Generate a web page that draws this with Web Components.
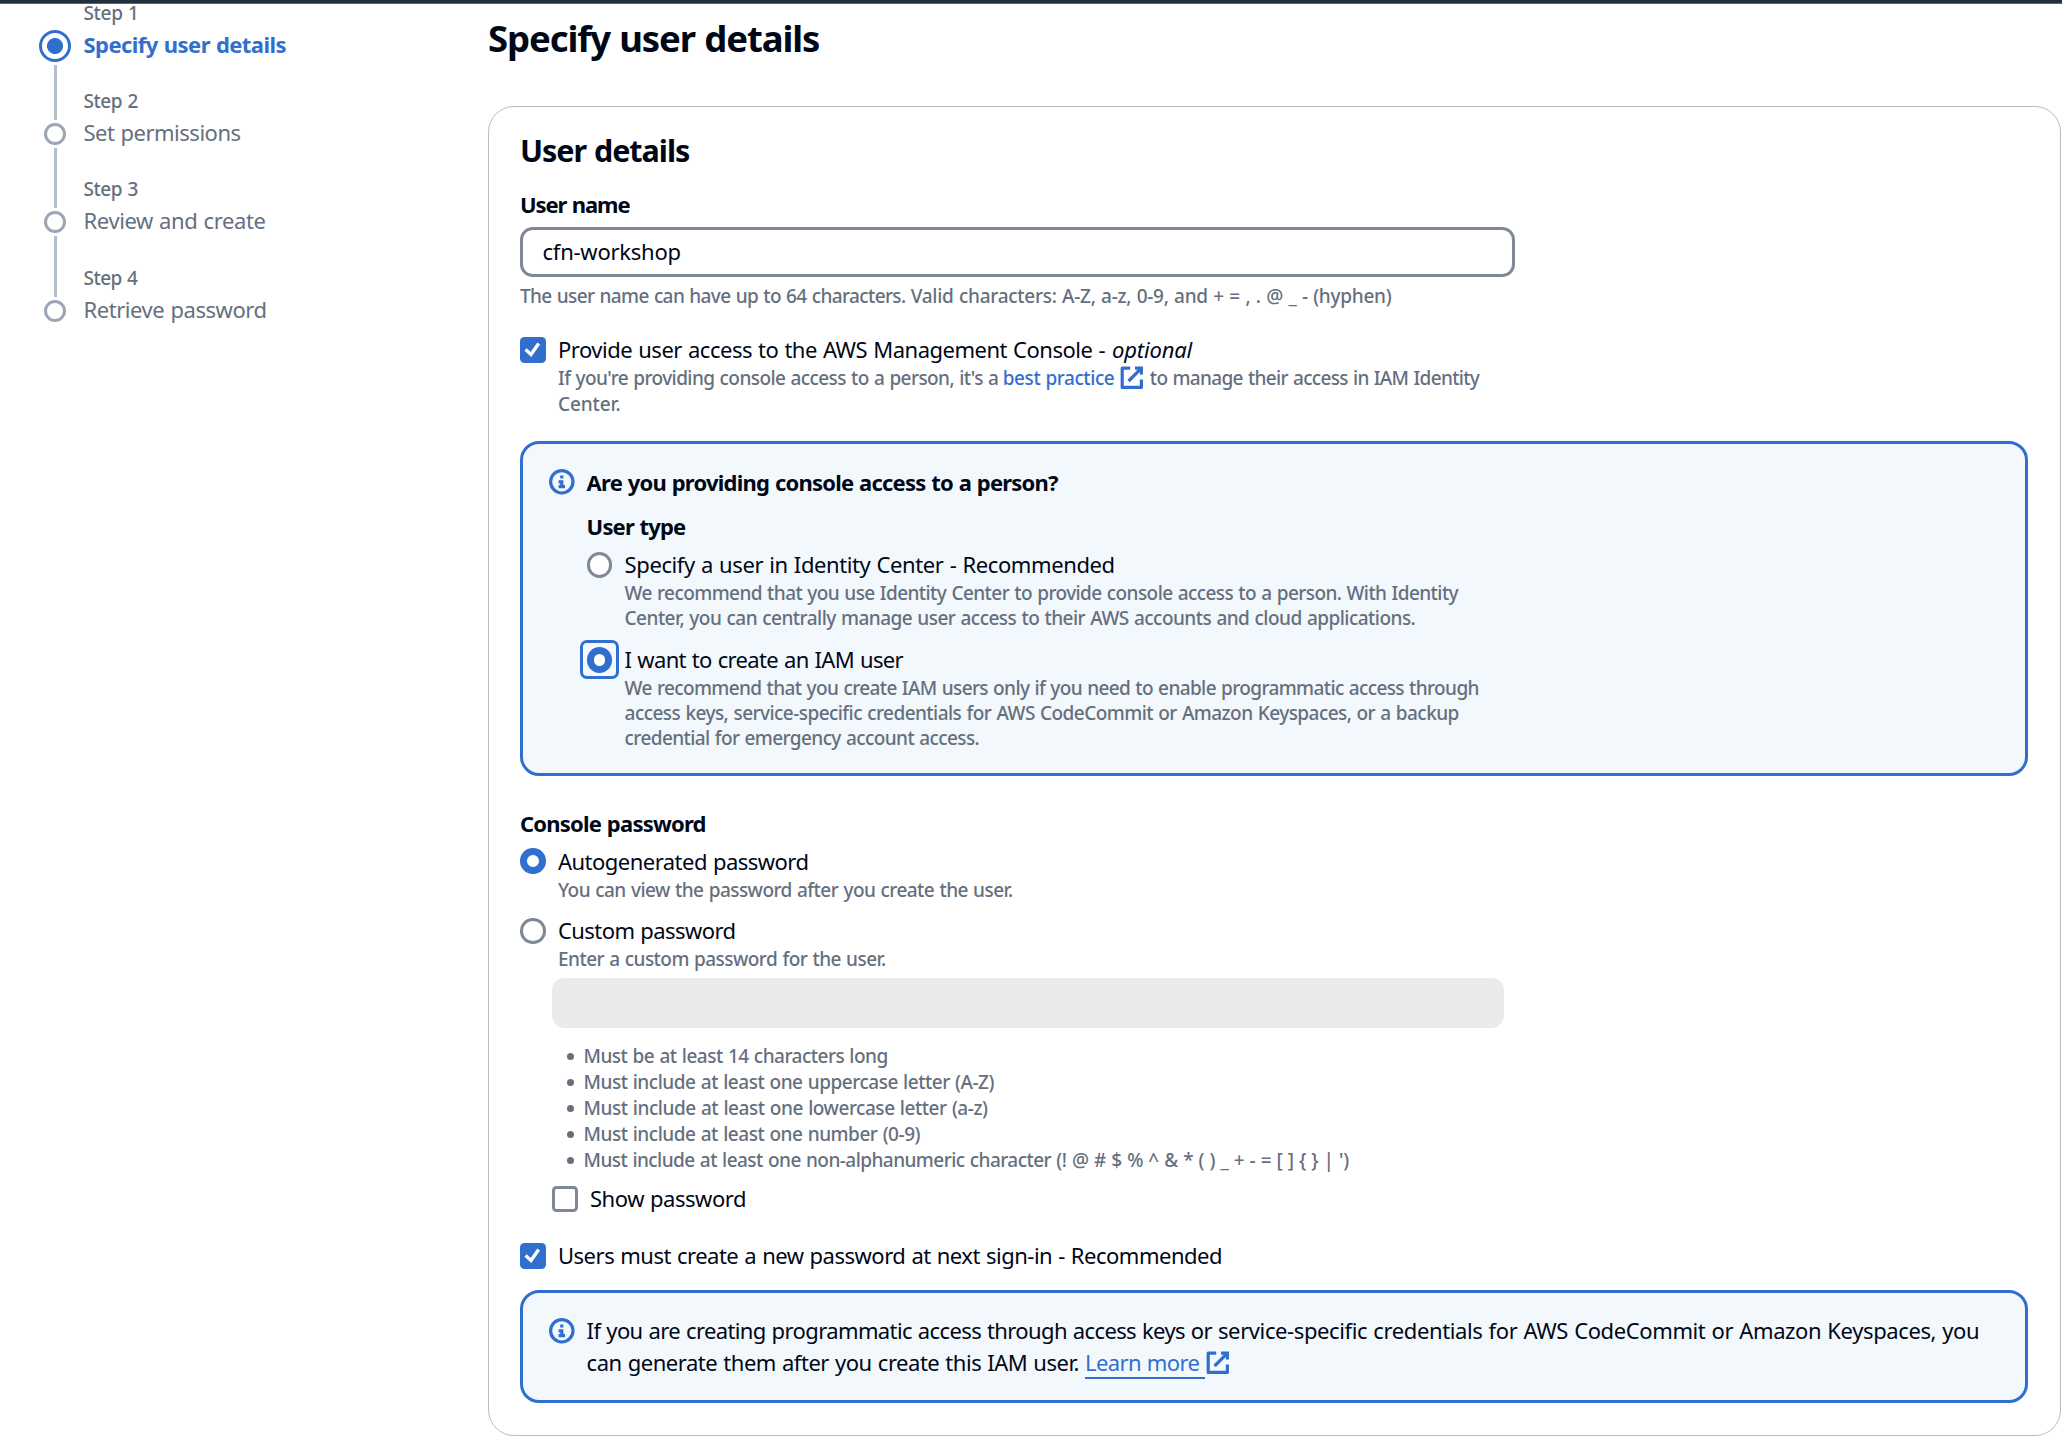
<!DOCTYPE html>
<html lang="en">
<head>
<meta charset="utf-8">
<title>Create user | IAM</title>
<style>
  html, body { margin: 0; background: #fff; }
  body { font-family: "Noto Sans", "Open Sans", sans-serif; color: #000716; }
</style>
</head>
<body>
<create-user-page></create-user-page>
<script>
const BLUE = '#316fce';

function define(name, html, setup) {
  const tpl = document.createElement('template');
  tpl.innerHTML = html.trim();
  customElements.define(name, class extends HTMLElement {
    constructor() {
      super();
      this.attachShadow({ mode: 'open' }).append(tpl.content.cloneNode(true));
    }
    connectedCallback() { if (setup) setup(this, this.shadowRoot); }
  });
}

/* One line of text, tracked so that its ink spans the width given in "w". */
const pen = document.createElement('canvas').getContext('2d');
const WORD_GAP = 0.8;
define('text-line', `<style>
  :host { display: block; flex: none; white-space: pre; font-size: 22px; line-height: 32px; height: 32px; font-weight: 450; word-spacing: ${WORD_GAP}px; }
  :host([kind="small"]) { font-size: 19px; line-height: 26px; height: 26px; color: #656f7e; font-weight: 520; }
  :host([kind="bold"]) { font-weight: 700; }
  :host([kind="h1"]) { font-size: 36.5px; line-height: 48px; height: 48px; font-weight: 700; }
  :host([kind="h2"]) { font-size: 30.5px; line-height: 40px; height: 40px; font-weight: 700; }
</style><slot></slot>`, (el) => {
  const w = parseFloat(el.getAttribute('w'));
  if (!w) return;
  const cs = getComputedStyle(el);
  pen.font = `${cs.fontStyle} ${cs.fontWeight} ${cs.fontSize} ${cs.fontFamily}`;
  const t = el.textContent.trim();
  const m = pen.measureText(t);
  const ink = m.actualBoundingBoxRight + m.actualBoundingBoxLeft + (t.split(' ').length - 1) * WORD_GAP;
  el.style.letterSpacing = ((w - ink) / (t.length - 1)).toFixed(3) + 'px';
});

define('external-icon', `
<style>:host { display: block; flex: none; width: 25.6px; height: 25.6px; } svg { display: block; }</style>
<svg width="25.6" height="25.6" viewBox="0 0 16 16" fill="none" stroke="${BLUE}" stroke-width="2" stroke-linejoin="round">
<path d="M10 2h4v4" stroke-linejoin="miter"/><path d="M6 10l8-8"/><path d="M14 9.05V14H2V2h5"/></svg>`);

define('info-icon', `
<style>:host { display: block; flex: none; width: 25.6px; height: 25.6px; } svg { display: block; }</style>
<svg width="25.6" height="25.6" viewBox="0 0 16 16" fill="none" stroke="${BLUE}" stroke-width="2">
<circle cx="8" cy="8" r="7"/><path d="M8 11V8H6M10 11H6M8 6V4"/></svg>`);

define('check-box', `
<style>
  :host { display: block; flex: none; box-sizing: border-box; width: 25.6px; height: 25.6px; border: 3px solid #7f8897; border-radius: 4.5px; background: #fff; }
  :host([checked]) { border: 0; background: ${BLUE}; }
  svg { display: none; }
  :host([checked]) svg { display: block; }
</style>
<svg width="25.6" height="25.6" viewBox="0 0 25.6 25.6" fill="none" stroke="#fff" stroke-width="3.4"><path d="M5.6 12.6L11 17.4L18.7 6.6"/></svg>`);

define('radio-dot', `
<style>
  :host { display: block; flex: none; box-sizing: border-box; width: 25.6px; height: 25.6px; border: 3px solid #7f8897; border-radius: 50%; background: #fff; }
  :host([checked]) { border: 7.8px solid ${BLUE}; }
  :host([focused]) { position: relative; }
  i { display: none; }
  :host([focused]) i { display: block; position: absolute; inset: -13.6px; border: 3px solid ${BLUE}; border-radius: 7px; }
</style><i></i>`);

define('wizard-step', `
<style>
  :host { display: flex; gap: 12.5px; color: #656f7e; }
  .track { width: 32px; display: flex; flex-direction: column; align-items: center; }
  .pre { width: 3px; height: 32px; background: #b6bec9; margin-bottom: 3px; }
  .ring { box-sizing: border-box; flex: none; width: 22px; height: 22px; border: 3px solid #9ba5b4; border-radius: 50%; }
  .post { width: 3px; flex: 1; background: #b6bec9; margin-top: 3px; }
  .text { display: flex; flex-direction: column; gap: 2px; }
  :host([active]) { color: ${BLUE}; }
  :host([active]) .pre { background: none; height: 27px; }
  :host([active]) .ring { width: 32px; height: 32px; border-color: ${BLUE}; background: radial-gradient(circle, ${BLUE} 7.6px, transparent 8.4px); }
  :host([last]) .post { visibility: hidden; }
</style>
<div class="track"><div class="pre"></div><div class="ring"></div><div class="post"></div></div>
<div class="text"><slot name="label"></slot><slot></slot></div>`);

define('option-row', `
<style>
  :host { display: flex; gap: 12.4px; }
  .text { margin-top: 4px; min-width: 0; }
</style>
<slot name="control"></slot><div class="text"><slot></slot></div>`);

define('info-alert', `
<style>
  :host { display: flex; box-sizing: border-box; gap: 12px; border: 3px solid ${BLUE}; border-radius: 19px; background: #f2f8fc; padding: 25px 26px 0; }
  .body { flex: 1; min-width: 0; }
</style>
<info-icon></info-icon><div class="body"><slot></slot></div>`);

define('text-field', `
<style>
  :host { display: flex; align-items: center; box-sizing: border-box; height: 50px; border: 3px solid #7f8897; border-radius: 12.8px; padding: 0 19.5px 2px; background: #fff; }
  :host([disabled]) { border: 0; background: #e9eaec; }
</style><slot></slot>`);

define('rule-item', `
<style>
  :host { display: flex; align-items: center; height: 26px; }
  i { width: 7px; height: 7px; border-radius: 50%; background: #656f7e; margin-right: 9.5px; }
</style><i></i><slot></slot>`);

define('create-user-page', `
<style>
  :host { display: flex; flex-direction: column; width: 2062px; height: 1444px; overflow: hidden; }
  .bar { height: 3px; background: #232f3e; border-bottom: 1px solid #5b6470; flex: none; }
  .page { display: flex; flex: 1; margin-top: -4px; }
  nav { width: 449px; padding-left: 39px; flex: none; }
  main { width: 1573px; display: flex; flex-direction: column; }
  .card { box-sizing: border-box; height: 1330px; border: 1px solid #b6bec9; border-radius: 26px; padding: 0 32px 0 31px; display: flex; flex-direction: column; margin-top: 44px; }
  .row { display: flex; }
  .link { color: ${BLUE}; }
  .under { box-shadow: 0 2px 0 ${BLUE}; }
</style>
<div class="bar"></div>
<div class="page">
  <nav>
    <wizard-step active style="height:88px"><text-line slot="label" kind="small" w="52.5">Step 1</text-line><text-line kind="bold" w="202">Specify user details</text-line></wizard-step>
    <wizard-step style="height:88px"><text-line slot="label" kind="small" w="54">Step 2</text-line><text-line w="156">Set permissions</text-line></wizard-step>
    <wizard-step style="height:89px"><text-line slot="label" kind="small" w="54">Step 3</text-line><text-line w="180">Review and create</text-line></wizard-step>
    <wizard-step last style="height:88.5px"><text-line slot="label" kind="small" w="54.5">Step 4</text-line><text-line w="180">Retrieve password</text-line></wizard-step>
  </nav>
  <main>
    <text-line kind="h1" w="330" style="margin-top:14px">Specify user details</text-line>
    <div class="card">
      <text-line kind="h2" w="168" style="margin-top:23px">User details</text-line>
      <text-line kind="bold" w="109.5" style="margin-top:18px">User name</text-line>
      <text-field style="width:995px;margin-top:7px"><text-line w="137">cfn-workshop</text-line></text-field>
      <div class="row" style="margin-top:6px"><text-line kind="small" w="385">The user name can have up to 64 characters. </text-line><text-line kind="small" w="481">Valid characters: A-Z, a-z, 0-9, and + = , . @ _ - (hyphen)</text-line></div>
      <option-row style="margin-top:28px;height:92px">
        <check-box slot="control" checked></check-box>
        <div class="row" style="margin-top:-8px"><text-line w="545.5">Provide user access to the AWS Management Console -</text-line><text-line w="80.5" style="margin-left:7px;font-style:italic">optional</text-line></div>
        <div class="row"><text-line kind="small" w="440">If you're providing console access to a person, it's a</text-line><text-line kind="small" class="link" w="110" style="margin-left:4.5px;color:#316fce">best practice</text-line><external-icon style="margin-left:5px"></external-icon><text-line kind="small" w="331" style="margin-left:5px">to manage their access in IAM Identity</text-line></div>
        <text-line kind="small" w="60.5">Center.</text-line>
      </option-row>
      <info-alert style="margin-top:12px;height:335px">
        <text-line kind="bold" w="472.5" style="margin-top:-3px">Are you providing console access to a person?</text-line>
        <text-line kind="bold" w="98.5" style="margin-top:12px">User type</text-line>
        <option-row style="margin-top:10px;height:95px">
          <radio-dot slot="control"></radio-dot>
          <text-line w="488" style="margin-top:-8px">Specify a user in Identity Center - Recommended</text-line>
          <text-line kind="small" w="835">We recommend that you use Identity Center to provide console access to a person. With Identity</text-line>
          <text-line kind="small" w="789" style="margin-top:-1px">Center, you can centrally manage user access to their AWS accounts and cloud applications.</text-line>
        </option-row>
        <option-row>
          <radio-dot slot="control" checked focused></radio-dot>
          <text-line w="279" style="margin-top:-8px">I want to create an IAM user</text-line>
          <text-line kind="small" w="854">We recommend that you create IAM users only if you need to enable programmatic access through</text-line>
          <text-line kind="small" w="834" style="margin-top:-1px">access keys, service-specific credentials for AWS CodeCommit or Amazon Keyspaces, or a backup</text-line>
          <text-line kind="small" w="353" style="margin-top:-1px">credential for emergency account access.</text-line>
        </option-row>
      </info-alert>
      <text-line kind="bold" w="184.5" style="margin-top:31px">Console password</text-line>
      <option-row style="margin-top:9px;height:70px">
        <radio-dot slot="control" checked></radio-dot>
        <text-line w="249.5" style="margin-top:-7px">Autogenerated password</text-line>
        <text-line kind="small" w="454">You can view the password after you create the user.</text-line>
      </option-row>
      <option-row style="height:60px">
        <radio-dot slot="control"></radio-dot>
        <text-line w="175.5" style="margin-top:-8px">Custom password</text-line>
        <text-line kind="small" w="326">Enter a custom password for the user.</text-line>
      </option-row>
      <text-field disabled style="width:952px;margin-left:32px"></text-field>
      <div style="padding:15px 0 0 47px">
        <rule-item><text-line kind="small" w="303">Must be at least 14 characters long</text-line></rule-item>
        <rule-item><text-line kind="small" w="410">Must include at least one uppercase letter (A-Z)</text-line></rule-item>
        <rule-item><text-line kind="small" w="403.5">Must include at least one lowercase letter (a-z)</text-line></rule-item>
        <rule-item><text-line kind="small" w="336">Must include at least one number (0-9)</text-line></rule-item>
        <rule-item><text-line kind="small" w="467">Must include at least one non-alphanumeric character </text-line><text-line kind="small" w="293">(! @ # $ % ^ &amp; * ( ) _ + - = [ ] { } | ')</text-line></rule-item>
      </div>
      <option-row style="margin:13px 0 0 32px;height:57px">
        <check-box slot="control"></check-box>
        <text-line w="154" style="margin-top:-8px">Show password</text-line>
      </option-row>
      <option-row style="height:47px">
        <check-box slot="control" checked></check-box>
        <text-line w="662" style="margin-top:-8px">Users must create a new password at next sign-in - Recommended</text-line>
      </option-row>
      <info-alert style="height:113px">
        <div class="row" style="margin-top:-4px"><text-line w="626">If you are creating programmatic access through access keys or </text-line><text-line w="759">service-specific credentials for AWS CodeCommit or Amazon Keyspaces, you</text-line></div>
        <div class="row"><text-line w="491">can generate them after you create this IAM user.</text-line><div style="margin-left:6px;width:120px;height:31px" class="link under"><text-line w="112.5">Learn more</text-line></div><external-icon style="margin-top:4px"></external-icon></div>
      </info-alert>
    </div>
  </main>
</div>`);
</script>
</body>
</html>
